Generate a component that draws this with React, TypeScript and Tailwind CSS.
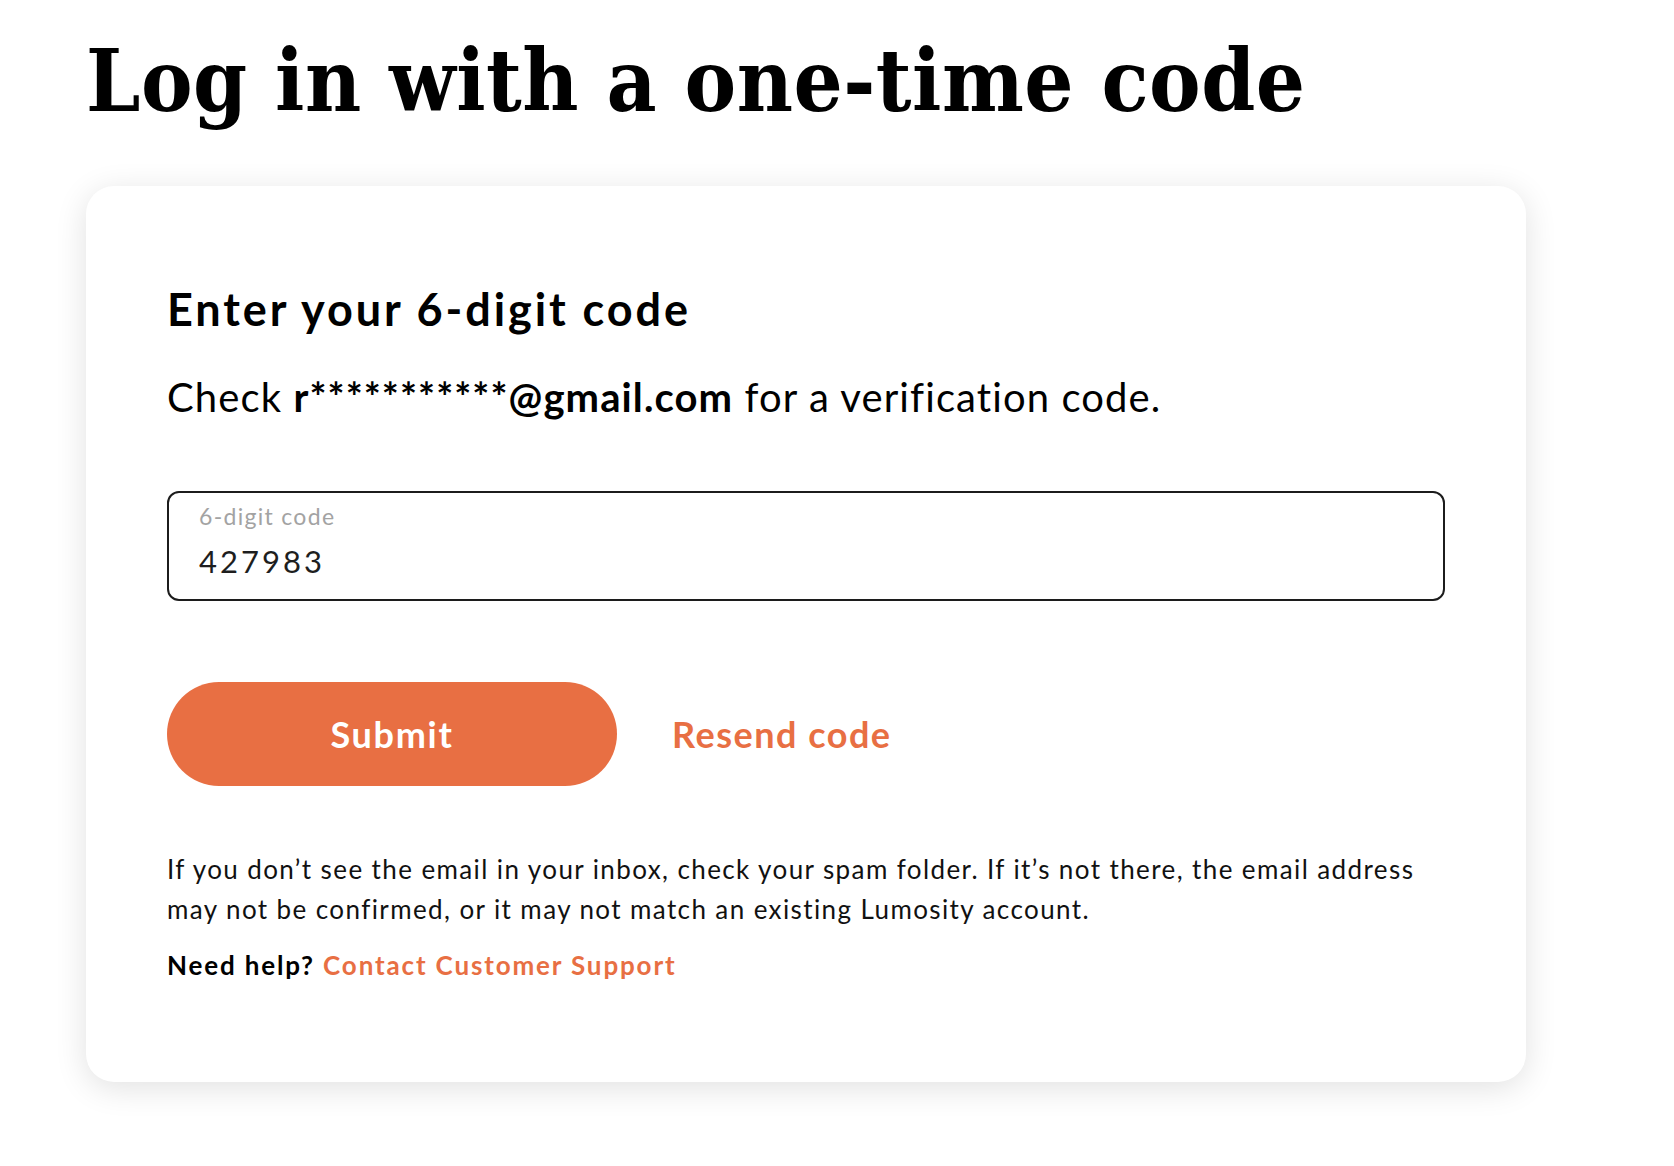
const ORANGE = "text-[#e86f43]";

export default function App() {
  return (
    <div className="min-h-screen bg-white px-[86px] pt-[35px] font-['Lato',sans-serif] text-black">
      <h1 className="font-['DejaVu_Serif',serif] text-[86px] font-bold leading-[92px] font-stretch-condensed tracking-[0.5px]">
        Log in with a one-time code
      </h1>

      <div className="mt-[59px] h-[896px] w-[1440px] rounded-[28px] bg-white px-[81px] pt-[96px] shadow-[0_6px_32px_rgba(0,0,0,0.12)]">
        <h2 className="text-[45px] font-bold leading-[54px] tracking-[2.9px]">Enter your 6-digit code</h2>
        <p className="mt-[37px] text-[40px] leading-[48px] tracking-[1.1px]">
          Check <span className="font-bold">r***********@gmail.com</span> for a verification code.
        </p>

        <label className="mt-[70px] flex h-[110px] flex-col rounded-[12px] border-2 border-[#1c1c1c] px-[30px] pt-[10px]">
          <span className="text-[23px] leading-[26px] tracking-[1.3px] text-[#a3a3a3]">6-digit code</span>
          <input
            readOnly
            value="427983"
            className="mt-[14px] h-[36px] bg-transparent text-[31px] leading-[36px] tracking-[3px] text-[#1e1e1e] outline-none"
          />
        </label>

        <div className="mt-[81px] flex items-center gap-[55px]">
          <button className="h-[104px] w-[450px] rounded-full bg-[#e86f43] text-[36px] font-bold tracking-[1.7px] text-white">
            Submit
          </button>
          <button className={`text-[36px] font-bold tracking-[1.5px] ${ORANGE}`}>Resend code</button>
        </div>

        <p className="mt-[63px] text-[26px] leading-[40px] tracking-[1.4px] text-[#111]">
          If you don’t see the email in your inbox, check your spam folder. If it’s not there, the email address
          <br />
          may not be confirmed, or it may not match an existing Lumosity account.
        </p>
        <p className="mt-[16px] text-[26px] leading-[40px] tracking-[1.85px]">
          <span className="font-bold">Need help? </span>
          <a href="#" className={`font-bold ${ORANGE}`}>
            Contact Customer Support
          </a>
        </p>
      </div>
    </div>
  );
}
